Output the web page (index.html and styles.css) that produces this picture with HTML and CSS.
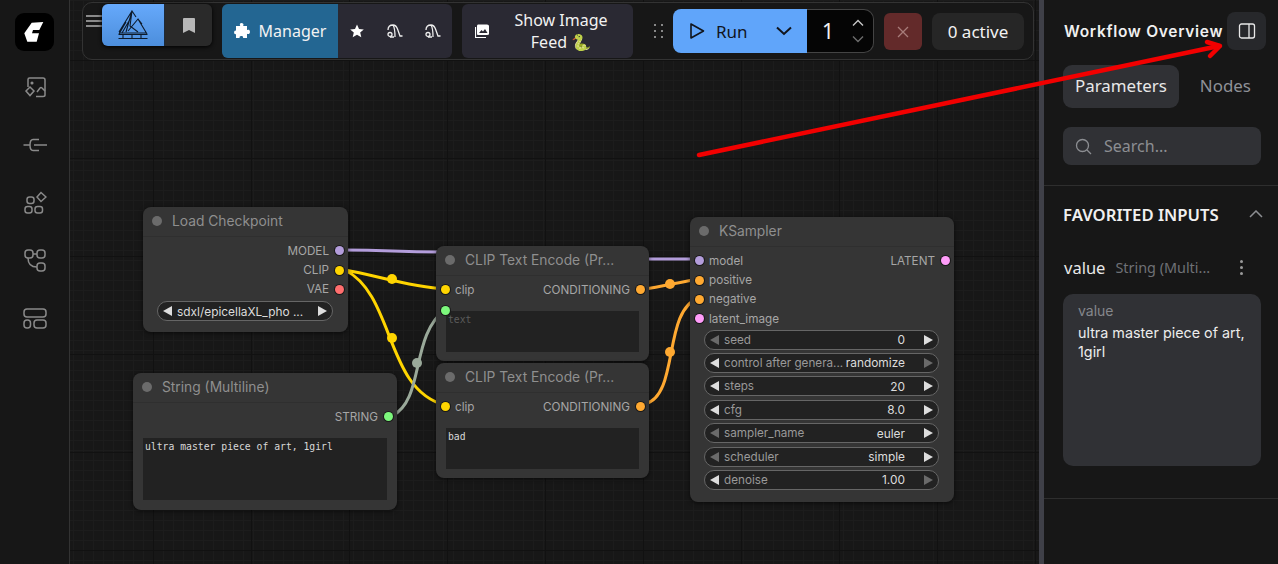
FILE: index.html
```html
<!DOCTYPE html>
<html lang="en">
<head>
    <meta charset="UTF-8">
    <title>ComfyUI</title>
    <link rel="stylesheet" href="styles.css">
</head>
<body>
    <nav class="sidebar">
        <div class="logo">
            <svg width="39" height="38" viewBox="0 0 39 38"><path d="M16.700 9.700 L28.300 9 L24.300 17 L18 17 L17 20.300 L24 20.300 L21.700 28.700 L12.300 28.700 L9.300 20.300 Z" fill="#fff"/></svg>
        </div>
        <div class="side-icons">
            <svg class="side-icon" viewBox="0 0 24 24"><path d="M5 11 V3.500 Q5 2 6.500 2 H20 Q22 2 22 4 V19 Q22 20.500 20 20.500 H13"/><circle cx="9" cy="7" r="0.8"/><path d="M14 16 L17 12 Q18 11 19 12 L22 15"/><path d="M7 11 L11 15 L7 19.500 L3 15 Z"/></svg>
            <svg class="side-icon" viewBox="0 0 24 24"><path d="M0.500 12 H6.500 M16 6.500 H10 Q7 6.500 7 12 Q7 17.500 10 17.500 H16 M11 12 H24"/></svg>
            <svg class="side-icon" viewBox="0 0 24 24"><rect x="4" y="6" width="7" height="6.500" rx="2.500"/><rect x="2" y="15.500" width="7" height="6.500" rx="2.500"/><rect x="12" y="15.500" width="7.500" height="6.500" rx="2.500"/><path d="M18 1.500 L23 6 L18 10.500 L14 6 Z"/></svg>
            <svg class="side-icon" viewBox="0 0 24 24"><rect x="2" y="2" width="8" height="8" rx="3"/><rect x="14" y="2" width="8" height="8" rx="3"/><rect x="14" y="15" width="8" height="8" rx="3"/><path d="M10 6 H14 M5 10 Q5 19 14 19"/></svg>
            <svg class="side-icon" viewBox="0 0 24 24"><rect x="1" y="3" width="22" height="8" rx="3"/><rect x="1" y="14" width="6.500" height="8" rx="3"/><rect x="11" y="14" width="12" height="8" rx="3"/></svg>
        </div>
    </nav>

    <main class="canvas">
        <svg class="wires" viewBox="70 0 969 564">
            <path class="wire wire-model" d="M344 250 C 390 250, 395 252, 440 252 L 640 259 L 695 259"/>
            <path class="wire wire-clip" d="M345 270 C 375 275, 410 287, 445 289"/>
            <path class="wire wire-clip" d="M345 270 C 395 295, 385 390, 445 405"/>
            <path class="wire wire-string" d="M392 416 C 425 400, 410 335, 445 310"/>
            <path class="wire wire-cond" d="M645 289 C 660 287, 680 282, 699 279"/>
            <path class="wire wire-cond" d="M645 404 C 680 395, 662 310, 699 298"/>
            <circle class="wire-dot dot-clip" cx="392" cy="279" r="5"/>
            <circle class="wire-dot dot-clip" cx="392" cy="338" r="5"/>
            <circle class="wire-dot dot-string" cx="417" cy="363" r="5"/>
            <circle class="wire-dot dot-cond" cx="670" cy="284" r="5"/>
            <circle class="wire-dot dot-cond" cx="670" cy="352" r="5"/>
        </svg>

        <section class="node node-checkpoint">
            <div class="node-title"><span class="node-dot"></span>Load Checkpoint</div>
            <div class="node-body">
                <div class="slot slot-out">MODEL<span class="pin pin-model"></span></div>
                <div class="slot slot-out">CLIP<span class="pin pin-clip"></span></div>
                <div class="slot slot-out">VAE<span class="pin pin-vae"></span></div>
                <div class="widget widget-file"><span class="arrow-left"></span><span class="widget-value file-name">sdxl/epicellaXL_pho ...</span><span class="arrow-right"></span></div>
            </div>
        </section>

        <section class="node node-string">
            <div class="node-title"><span class="node-dot"></span>String (Multiline)</div>
            <div class="node-body">
                <div class="slot slot-out">STRING<span class="pin pin-string"></span></div>
                <div class="textbox textbox-string">ultra master piece of art, 1girl</div>
            </div>
        </section>

        <section class="node node-clip-one">
            <div class="node-title"><span class="node-dot"></span>CLIP Text Encode (Pr...</div>
            <div class="node-body">
                <div class="slot slot-both"><span class="slot-in"><span class="pin pin-clip"></span>clip</span><span class="slot-right">CONDITIONING<span class="pin pin-cond"></span></span></div>
                <span class="pin pin-string pin-text"></span>
                <div class="textbox textbox-clip placeholder">text</div>
            </div>
        </section>

        <section class="node node-clip-two">
            <div class="node-title"><span class="node-dot"></span>CLIP Text Encode (Pr...</div>
            <div class="node-body">
                <div class="slot slot-both"><span class="slot-in"><span class="pin pin-clip"></span>clip</span><span class="slot-right">CONDITIONING<span class="pin pin-cond"></span></span></div>
                <div class="textbox textbox-clip">bad</div>
            </div>
        </section>

        <section class="node node-sampler">
            <div class="node-title"><span class="node-dot"></span>KSampler</div>
            <div class="node-body">
                <div class="slot slot-both"><span class="slot-in"><span class="pin pin-model"></span>model</span><span class="slot-right">LATENT<span class="pin pin-latent"></span></span></div>
                <div class="slot"><span class="slot-in"><span class="pin pin-cond"></span>positive</span></div>
                <div class="slot"><span class="slot-in"><span class="pin pin-cond"></span>negative</span></div>
                <div class="slot"><span class="slot-in"><span class="pin pin-latent"></span>latent_image</span></div>
                <div class="widget-list">
                    <div class="widget"><span class="arrow-left off"></span><span class="widget-label">seed</span><span class="widget-value">0</span><span class="arrow-right"></span></div>
                    <div class="widget"><span class="arrow-left"></span><span class="widget-label">control after genera...</span><span class="widget-value">randomize</span><span class="arrow-right off"></span></div>
                    <div class="widget"><span class="arrow-left"></span><span class="widget-label">steps</span><span class="widget-value">20</span><span class="arrow-right"></span></div>
                    <div class="widget"><span class="arrow-left"></span><span class="widget-label">cfg</span><span class="widget-value">8.0</span><span class="arrow-right"></span></div>
                    <div class="widget"><span class="arrow-left off"></span><span class="widget-label">sampler_name</span><span class="widget-value">euler</span><span class="arrow-right"></span></div>
                    <div class="widget"><span class="arrow-left off"></span><span class="widget-label">scheduler</span><span class="widget-value">simple</span><span class="arrow-right"></span></div>
                    <div class="widget"><span class="arrow-left"></span><span class="widget-label">denoise</span><span class="widget-value">1.00</span><span class="arrow-right off"></span></div>
                </div>
            </div>
        </section>

        <header class="toolbar">
            <div class="hamburger"><span></span><span></span><span></span></div>
            <div class="logo-group">
                <button class="logo-btn">
                    <svg width="30" height="30" viewBox="0 0 30 30" fill="none" stroke="#0d1a2a" stroke-width="1.100">
                        <path d="M0.500 24.500 H29.500 M0.500 28.500 H29.500 M5 24.500 V28.500 M14 24.500 V28.500 M23 24.500 V28.500"/>
                        <path d="M1 22 L14 1 L18 7 M14 1 L8 22 M14 1 L12 16 L20 22 M1 24 L8 12 M4 23 L11 11"/>
                        <path d="M10 21 L20 9 L24 14 M20 9 L29 24 M1 23 H28"/>
                    </svg>
                </button>
                <button class="bookmark-btn">
                    <svg width="12" height="15" viewBox="0 0 12 15"><path d="M0 1 Q0 0 1 0 H11 Q12 0 12 1 V15 L6 12 L0 15 Z" fill="#b8b8b8"/></svg>
                </button>
            </div>
            <div class="manager-group">
                <button class="manager-btn">
                    <svg width="16" height="16" viewBox="0 0 16 16"><path d="M6 1 Q6 0 7.500 0 Q9.500 0 9.500 1.500 Q9.500 2.500 9 3 H13 V7 Q14 6.500 14.800 6.800 Q16 7.300 16 9 Q16 10.700 14.800 11 Q14 11.300 13 10.800 V15 H9 Q9.500 13.500 8 13 Q6 12.700 5.500 14 Q5.300 14.500 5.800 15 H2 V11 Q1 11.500 0.500 10.800 Q-0.300 9.500 0.500 8 Q1 7.300 2 7.800 V3 H6.300 Q5.500 2 6 1 Z" fill="#fff"/></svg>
                    Manager
                </button>
                <button class="tool-btn">
                    <svg width="14" height="14" viewBox="0 0 14 14"><path d="M7 0.500 L9 5 L13.800 5.400 L10.200 8.500 L11.300 13.300 L7 10.800 L2.700 13.300 L3.800 8.500 L0.200 5.400 L5 5 Z" fill="#fff"/></svg>
                </button>
                <button class="tool-btn">
                    <svg class="vacuum" viewBox="0 0 16 14"><path d="M1 6 Q1 1 6 1 Q9 1 10.500 5 L13 12 H15.500 M6 1 Q8 4 8 13 M3 13 H7"/><circle cx="3" cy="10.500" r="2"/></svg>
                </button>
                <button class="tool-btn">
                    <svg class="vacuum" viewBox="0 0 16 14"><path d="M1 6 Q1 1 6 1 Q9 1 10.500 5 L13 12 H15.500 M6 1 Q8 4 8 13 M3 13 H7"/><circle cx="3" cy="10.500" r="2"/></svg>
                </button>
            </div>
            <button class="feed-btn">
                <svg width="14" height="14" viewBox="0 0 14 14"><path d="M3 0.500 H12 Q14 0.500 14 2 V10 Q14 11 12 11 H3 Q2 11 2 10 V2 Q2 0.500 3 0.500 Z" fill="#fff"/><path d="M4 9 L6.500 6 L8 7.500 L10 5 L12.500 9 Z" fill="#2a2933"/><path d="M0.500 3 V13.500 H11" fill="none" stroke="#fff" stroke-width="1.200"/></svg>
                <span class="feed-label">Show Image Feed 🐍</span>
            </button>
            <div class="drag-dots"><span></span><span></span><span></span><span></span><span></span><span></span></div>
            <div class="run-group">
                <button class="run-btn">
                    <svg width="16" height="18" viewBox="0 0 16 18" fill="none" stroke="#11151c" stroke-width="1.600" stroke-linejoin="round"><path d="M2 2 V16 L14.500 9 Z"/></svg>
                    <span class="run-label">Run</span>
                    <svg class="run-chevron" width="18" height="10" viewBox="0 0 18 10" fill="none" stroke="#11151c" stroke-width="2"><path d="M2 1.500 L9 8 L16 1.500"/></svg>
                </button>
                <div class="run-count">
                    <span>1</span>
                    <div class="spinner">
                        <svg width="12" height="8" viewBox="0 0 12 8" fill="none" stroke="#c8c8c8" stroke-width="1.400"><path d="M1 6.500 L6 1.500 L11 6.500"/></svg>
                        <svg width="12" height="8" viewBox="0 0 12 8" fill="none" stroke="#6d6d6d" stroke-width="1.400"><path d="M1 1.500 L6 6.500 L11 1.500"/></svg>
                    </div>
                </div>
            </div>
            <button class="cancel-btn">
                <svg width="12" height="12" viewBox="0 0 12 12" fill="none" stroke="#a77c7a" stroke-width="1.300"><path d="M1 1 L11 11 M11 1 L1 11"/></svg>
            </button>
            <div class="active-count">0 active</div>
        </header>
    </main>

    <div class="splitter"></div>

    <aside class="panel">
        <div class="panel-top">
            <div class="panel-head">
                <h2>Workflow Overview</h2>
                <button class="panel-toggle">
                    <svg width="18" height="18" viewBox="0 0 18 18" fill="none" stroke="#e8e8e8" stroke-width="1.300"><rect x="1.500" y="2" width="15" height="14" rx="2"/><path d="M11 2 V16"/></svg>
                </button>
            </div>
            <div class="tabs">
                <span class="tab tab-active">Parameters</span>
                <span class="tab">Nodes</span>
            </div>
            <div class="search">
                <svg width="17" height="17" viewBox="0 0 17 17" fill="none" stroke="#8c8e92" stroke-width="1.300"><circle cx="7.500" cy="7.500" r="6"/><path d="M12 12 L16 16"/></svg>
                <span>Search...</span>
            </div>
        </div>
        <div class="panel-section">
            <div class="section-head">
                <h3>FAVORITED INPUTS</h3>
                <svg width="14" height="8" viewBox="0 0 14 8" fill="none" stroke="#8c8e92" stroke-width="1.500"><path d="M1 7 L7 1 L13 7"/></svg>
            </div>
            <div class="field-head">
                <span class="field-name">value</span>
                <span class="field-source">String (Multi...</span>
                <span class="field-menu"><i></i><i></i><i></i></span>
            </div>
            <div class="field-box">
                <div class="field-box-label">value</div>
                <div class="field-box-text">ultra master piece of art, 1girl</div>
            </div>
        </div>
    </aside>

    <svg class="red-arrow" viewBox="0 0 1278 564" fill="none" stroke="#f20000" stroke-width="4.500" stroke-linecap="round" stroke-linejoin="round">
        <path d="M699 155 L1219 46"/>
        <path d="M1207 42 L1220 46 L1210 56"/>
    </svg>
</body>
</html>
```

FILE: styles.css
```css
* {
    box-sizing: border-box;
}
body {
    margin: 0;
    height: 564px;
    display: flex;
    overflow: hidden;
    position: relative;
    background-color: #161616;
    font-family: Inter, "Liberation Sans", sans-serif;
    color: #e8e8e8;
}
button {
    border: none;
    font-family: inherit;
    color: inherit;
    padding: 0;
}

/* left bar */
.sidebar {
    width: 70px;
    flex-shrink: 0;
    background-color: #171717;
    border-right: 1px solid #333;
    display: flex;
    flex-direction: column;
    align-items: center;
    padding-top: 13px;
}
.logo {
    width: 39px;
    height: 38px;
    background-color: #000;
    border-radius: 9px;
}
.side-icons {
    display: flex;
    flex-direction: column;
    gap: 33.400px;
    margin-top: 25px;
}
.side-icon {
    width: 24px;
    height: 24px;
    fill: none;
    stroke: #8a8a8a;
    stroke-width: 1.500;
}

/* canvas */
.canvas {
    width: 969px;
    flex-shrink: 0;
    position: relative;
    background-color: #171717;
    background-image:
        linear-gradient(#111 1px, transparent 1px),
        linear-gradient(90deg, #111 1px, transparent 1px),
        linear-gradient(#1c1c1c 1px, transparent 1px),
        linear-gradient(90deg, #1c1c1c 1px, transparent 1px);
    background-size: 98px 98px, 98px 98px, 10px 10px, 10px 10px;
    background-position: 0 60px, 83px 0, 0 0, 3px 0;
}
.wires {
    position: absolute;
    inset: 0;
    width: 969px;
    height: 564px;
}
.wire {
    fill: none;
    stroke-width: 3;
}
.wire-model { stroke: #b39ddb; }
.wire-clip { stroke: #ffd500; }
.wire-string { stroke: #9aa99a; }
.wire-cond { stroke: #ffa931; }
.dot-clip { fill: #ffd500; }
.dot-string { fill: #9aa99a; }
.dot-cond { fill: #ffa931; }

/* nodes */
.node {
    position: absolute;
    background-color: #353535;
    border-radius: 8px;
    box-shadow: 0 1px 4px rgba(0, 0, 0, 0.6);
    font-size: 11.700px;
    color: #a6a6a6;
}
.node-checkpoint { left: 73px; top: 207px; width: 205px; height: 125px; }
.node-string { left: 63px; top: 373px; width: 264px; height: 137px; }
.node-clip-one { left: 366px; top: 246px; width: 213px; height: 115px; }
.node-clip-two { left: 366px; top: 363px; width: 213px; height: 115px; }
.node-sampler { left: 620px; top: 217px; width: 264px; height: 285px; }

.node-title {
    height: 30px;
    display: flex;
    align-items: center;
    gap: 10px;
    padding: 0 0 1px 9px;
    font-size: 13.800px;
    color: #8f8f8f;
    border-bottom: 1px solid #2f2f2f;
}
.node-dot {
    width: 10px;
    height: 10px;
    border-radius: 50%;
    background-color: #6b6b6b;
}
.node-body {
    position: relative;
    padding: 4px 4.500px 0 4.500px;
}
.slot {
    height: 19.400px;
    display: flex;
    align-items: center;
}
.slot-out {
    justify-content: flex-end;
}
.slot-both {
    justify-content: space-between;
}
.slot-in,
.slot-right,
.slot-out {
    display: flex;
    align-items: center;
    gap: 5.500px;
}
.pin {
    width: 9px;
    height: 9px;
    flex-shrink: 0;
    border-radius: 50%;
    box-shadow: 0 0 0 1px #1a1a1a;
}
.pin-model { background-color: #b39ddb; }
.pin-clip { background-color: #ffd500; }
.pin-vae { background-color: #ff6e6e; }
.pin-string { background-color: #7cf77c; }
.pin-cond { background-color: #ffa931; }
.pin-latent { background-color: #ff9cf9; }
.pin-text {
    position: absolute;
    left: 5px;
    top: 30px;
    z-index: 1;
}
.textbox {
    background-color: #222;
    font-family: "DejaVu Sans Mono", "Liberation Mono", monospace;
    font-size: 9.750px;
    color: #d8d8d8;
    padding: 3px 2px;
}
.textbox-string {
    width: 244px;
    height: 62px;
    margin: 11.500px 0 0 5.500px;
}
.textbox-clip {
    width: 193px;
    height: 41px;
    margin: 11.500px 0 0 5.500px;
}
.placeholder {
    color: #5c5c5c;
}
.widget {
    height: 20px;
    display: flex;
    align-items: center;
    background-color: #222;
    border: 1px solid #666;
    border-radius: 10px;
    padding: 0 5px;
    font-size: 11.700px;
    color: #999;
}
.widget-list {
    display: flex;
    flex-direction: column;
    gap: 3.400px;
    margin: 1px 10.500px 0 9.500px;
}
.widget-file {
    width: 176px;
    margin: 2px 0 0 9.500px;
}
.widget-label {
    margin-left: 5px;
    white-space: nowrap;
}
.widget-value {
    margin-left: auto;
    margin-right: 19px;
    font-size: 11.900px;
    color: #dcdcdc;
    white-space: nowrap;
}
.file-name {
    margin-left: 5px;
    margin-right: auto;
}
.arrow-left,
.arrow-right {
    width: 0;
    height: 0;
    border-top: 5px solid transparent;
    border-bottom: 5px solid transparent;
    flex-shrink: 0;
}
.arrow-left { border-right: 9px solid #ddd; }
.arrow-right { border-left: 9px solid #ddd; }
.arrow-left.off { border-right-color: #6a6a6a; }
.arrow-right.off { border-left-color: #6a6a6a; }

/* toolbar */
.toolbar {
    position: absolute;
    left: 12px;
    top: 2px;
    width: 952px;
    height: 58px;
    display: flex;
    align-items: flex-start;
    border: 1px solid #333;
    border-radius: 10px;
    background-color: #171717;
    font-family: "Noto Sans", "Liberation Sans", sans-serif;
    font-size: 16px;
    color: #f2f2f2;
}
.hamburger {
    width: 16px;
    margin: 12px 0 0 3px;
    display: flex;
    flex-direction: column;
    gap: 3px;
}
.hamburger span {
    height: 2px;
    background-color: #8a8a8a;
}
.logo-group {
    display: flex;
    margin-top: 1px;
    height: 42px;
    border-radius: 6px;
    box-shadow: 0 1px 4px #000;
}
.logo-btn {
    width: 63px;
    background: linear-gradient(#66a9fb, #4c8edc);
    border-radius: 6px 0 0 6px;
    display: flex;
    align-items: center;
    justify-content: center;
    border-right: 1px solid #1d2a3a;
}
.bookmark-btn {
    width: 47px;
    background-color: #2a2a2a;
    border-radius: 0 6px 6px 0;
    display: flex;
    align-items: center;
    justify-content: center;
}
.manager-group {
    display: flex;
    margin: 1px 0 0 10px;
    height: 54px;
    width: 230px;
    background-color: #2a2933;
    border-radius: 6px;
    overflow: hidden;
}
.manager-btn {
    width: 116px;
    background-color: #236692;
    display: flex;
    align-items: center;
    justify-content: center;
    gap: 9px;
    font-size: 16px;
}
.tool-btn {
    flex: 1;
    background: none;
    display: flex;
    align-items: center;
    justify-content: center;
}
.vacuum {
    width: 16px;
    height: 14px;
    fill: none;
    stroke: #eee;
    stroke-width: 1.300;
}
.feed-btn {
    width: 171px;
    height: 54px;
    margin: 1px 0 0 10px;
    background-color: #2a2933;
    border-radius: 6px;
    display: flex;
    align-items: center;
    padding-left: 13px;
    font-size: 16px;
    line-height: 22px;
}
.feed-label {
    width: 124px;
    margin-left: 10px;
    text-align: center;
}
.drag-dots {
    display: grid;
    grid-template-columns: 2px 2px;
    gap: 4px 5px;
    margin: 21px 0 0 21px;
}
.drag-dots span {
    height: 2px;
    background-color: #888;
}
.run-group {
    display: flex;
    height: 44px;
    margin: 6px 0 0 10px;
}
.run-btn {
    width: 134px;
    background-color: #60a5fa;
    border-radius: 8px 0 0 8px;
    display: flex;
    align-items: center;
    padding-left: 16px;
    color: #11151c;
    font-size: 17px;
}
.run-label {
    margin-left: 11px;
}
.run-chevron {
    margin-left: auto;
    margin-right: 14px;
}
.run-count {
    width: 67px;
    background-color: #050505;
    border: 1px solid #444;
    border-left: none;
    border-radius: 0 10px 10px 0;
    display: flex;
    align-items: center;
    justify-content: space-between;
    padding: 0 9px 0 15px;
    font-size: 21px;
}
.spinner {
    display: flex;
    flex-direction: column;
    gap: 8px;
}
.spinner svg {
    display: block;
}
.cancel-btn {
    width: 38px;
    height: 37px;
    margin: 10px 0 0 10px;
    background-color: #632a2a;
    border-radius: 6px;
    display: flex;
    align-items: center;
    justify-content: center;
}
.active-count {
    width: 92px;
    height: 37px;
    margin: 10px 0 0 10px;
    background-color: #262626;
    border-radius: 8px;
    display: flex;
    align-items: center;
    justify-content: center;
    font-size: 17px;
}

/* right panel */
.splitter {
    width: 5px;
    flex-shrink: 0;
    background-color: #3f4048;
}
.panel {
    width: 234px;
    flex-shrink: 0;
    background-color: #171717;
}
.panel-top {
    height: 186px;
    padding: 12px 12px 0 20px;
    border-bottom: 1px solid #2e2e2e;
}
.panel-head {
    display: flex;
    align-items: center;
    justify-content: space-between;
}
.panel-head h2 {
    margin: 0;
    font-size: 15.500px;
    font-weight: 600;
    letter-spacing: 0.700px;
    color: #f0f0f0;
    white-space: nowrap;
}
.panel-toggle {
    width: 39px;
    height: 38px;
    flex-shrink: 0;
    background-color: #27282b;
    border-radius: 8px;
    display: flex;
    align-items: center;
    justify-content: center;
}
.tabs {
    display: flex;
    align-items: center;
    gap: 9px;
    margin: 15px 0 0 -1px;
    height: 43px;
    font-family: "Noto Sans", sans-serif;
}
.tab {
    padding: 0 12px 2px;
    font-size: 16.900px;
    line-height: 41px;
    color: #8f9197;
    border-radius: 9px;
}
.tab-active {
    background-color: #303135;
    color: #e8e8e8;
}
.search {
    width: 198px;
    height: 38px;
    margin: 19px 0 0 -1px;
    background-color: #303135;
    border-radius: 8px;
    display: flex;
    align-items: center;
    gap: 12px;
    padding-left: 12px;
    font-family: "Noto Sans", sans-serif;
    font-size: 16px;
    color: #8c8e92;
}
.panel-section {
    height: 313px;
    padding: 18px 15px 0 20px;
    border-bottom: 1px solid #2e2e2e;
}
.section-head {
    display: flex;
    align-items: center;
    justify-content: space-between;
    height: 20px;
    margin-left: -1px;
}
.section-head h3 {
    margin: 0;
    font-family: "Noto Sans", sans-serif;
    font-size: 16.700px;
    font-weight: 600;
    color: #f0f0f0;
}
.field-head {
    display: flex;
    align-items: center;
    margin-top: 33px;
    height: 20px;
}
.field-name {
    font-family: "Noto Sans", sans-serif;
    font-size: 16.500px;
}
.field-source {
    margin-left: 10px;
    font-family: "Noto Sans", sans-serif;
    font-size: 14.400px;
    color: #6f7176;
}
.field-menu {
    margin-left: auto;
    margin-right: 20px;
    display: flex;
    flex-direction: column;
    gap: 3px;
}
.field-menu i {
    width: 3px;
    height: 3px;
    border-radius: 50%;
    background-color: #9a9a9a;
}
.field-box {
    width: 198px;
    height: 172px;
    margin: 17px 0 0 -1px;
    background-color: #303135;
    border-radius: 10px;
    padding: 8px 15px;
}
.field-box-label {
    font-size: 14px;
    color: #85878c;
    line-height: 18px;
}
.field-box-text {
    margin-top: 3px;
    font-size: 14.350px;
    line-height: 19px;
    color: #ececec;
}

/* annotation */
.red-arrow {
    position: absolute;
    left: 0;
    top: 0;
    width: 1278px;
    height: 564px;
    pointer-events: none;
}
```
